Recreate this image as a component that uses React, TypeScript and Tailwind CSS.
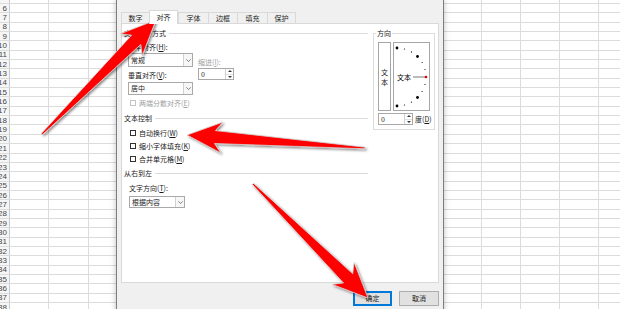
import React from "react";

const ROWS = Array.from({ length: 33 }, (_, i) => i + 6);
const COLS = Array.from({ length: 16 }, (_, i) => i);

const ARROWS: { t: [number, number]; p: [number, number] }[] = [
	{ t: [42, 134], p: [156, 20] },
	{ t: [365, 148], p: [187, 135] },
	{ t: [253, 184], p: [368, 298] },
];

function arrowPoints(t: [number, number], p: [number, number]) {
	const dx = p[0] - t[0];
	const dy = p[1] - t[1];
	const len = Math.hypot(dx, dy);
	const ux = dx / len;
	const uy = dy / len;
	const nx = -uy;
	const ny = ux;
	const at = (back: number, side: number) => [
		p[0] - ux * back + nx * side,
		p[1] - uy * back + ny * side,
	];
	const pts = [
		[t[0] + nx * 0.8, t[1] + ny * 0.8],
		at(28, 6.5),
		at(35, 15.5),
		[p[0], p[1]],
		at(35, -15.5),
		at(28, -6.5),
		[t[0] - nx * 0.8, t[1] - ny * 0.8],
	];
	return pts.map((q) => q[0].toFixed(1) + "," + q[1].toFixed(1)).join(" ");
}

function Key({ k }: { k: string }) {
	return <span className="underline">{k}</span>;
}

function GroupHeader({ children }: { children: React.ReactNode }) {
	return (
		<div className="flex items-center h-[9px] gap-[3px]">
			<span className="whitespace-nowrap">{children}</span>
			<div className="flex-1 h-px bg-[#dcdcdc]" />
		</div>
	);
}

function Check({
	children,
	disabled,
	className,
}: {
	children: React.ReactNode;
	disabled?: boolean;
	className?: string;
}) {
	return (
		<div className={"flex items-center h-[9px] gap-[3px] pl-[6px] " + (className || "")}>
			<div
				className={
					"w-[6px] h-[6px] border bg-white " +
					(disabled ? "border-[#c4c4c4]" : "border-[#333333]")
				}
			/>
			<span className={disabled ? "text-[#a0a0a0]" : ""}>{children}</span>
		</div>
	);
}

function Select({
	value,
	width,
	height,
	className,
}: {
	value: string;
	width: string;
	height: string;
	className?: string;
}) {
	return (
		<div
			className={
				"flex border border-[#a9a9a9] bg-white " + width + " " + height + " " + (className || "")
			}
		>
			<div className="flex-1 flex items-center pl-[2px]">{value}</div>
			<div className="w-[9px] border-l border-[#d0d0d0] bg-[#f7f7f7] flex items-center justify-center">
				<svg width="5" height="3" viewBox="0 0 5 3">
					<path d="M0.3 0.3 L2.5 2.6 L4.7 0.3" fill="none" stroke="#555" strokeWidth="0.7" />
				</svg>
			</div>
		</div>
	);
}

function Spin({ width, className }: { width: string; className?: string }) {
	return (
		<div className={"flex h-[12px] border border-[#a9a9a9] bg-white " + width + " " + (className || "")}>
			<div className="flex-1 flex items-center pl-[2px]">0</div>
			<div className="w-[8px] border-l border-[#d0d0d0] flex flex-col">
				<div className="flex-1 flex items-center justify-center border-b border-[#e0e0e0]">
					<svg width="4" height="2" viewBox="0 0 4 2">
						<path d="M0 2 L2 0 L4 2 Z" fill="#333" />
					</svg>
				</div>
				<div className="flex-1 flex items-center justify-center">
					<svg width="4" height="2" viewBox="0 0 4 2">
						<path d="M0 0 L2 2 L4 0 Z" fill="#333" />
					</svg>
				</div>
			</div>
		</div>
	);
}

function Orientation() {
	const dots = [];
	for (let a = -90; a <= 90; a += 15) {
		const r = (a * Math.PI) / 180;
		const x = 4 + 29 * Math.cos(r);
		const y = 35 + 29 * Math.sin(r);
		const big = Math.abs(a) === 45 || Math.abs(a) === 90;
		dots.push(
			<circle
				key={a}
				cx={x}
				cy={y}
				r={a === 0 ? 1.3 : big ? 1.4 : 0.6}
				fill={a === 0 ? "#e00000" : "#000"}
			/>
		);
	}
	return (
		<svg width="37" height="69" viewBox="0 0 37 69" className="absolute left-[-1px] top-[-1px]">
			{dots}
			<text x="4" y="37.5" fontSize="7" fill="#000" fontFamily="Noto Sans CJK SC, sans-serif">
				文本
			</text>
			<line x1="20" y1="35" x2="32" y2="35" stroke="#555" strokeWidth="0.8" />
		</svg>
	);
}

export default function App() {
	const tabs = [
		{ label: "数字", w: "w-[28px]" },
		{ label: "对齐", w: "w-[29px]", active: true },
		{ label: "字体", w: "w-[30px]" },
		{ label: "边框", w: "w-[29px]" },
		{ label: "填充", w: "w-[30px]" },
		{ label: "保护", w: "w-[29px]" },
	];

	return (
		<div className="relative w-[620px] h-[309px] overflow-hidden bg-white font-['Noto_Sans_CJK_SC',sans-serif] text-[7px] leading-[9px] text-[#1a1a1a]">
			{/* sheet behind the dialog */}
			<div className="flex flex-col">
				<div className="flex h-[4px] border-b border-[#dcdcdc]">
					<div className="w-[10px] shrink-0 border-r border-[#c8c8c8] bg-[#f6f6f6]" />
					{COLS.map((c) => (
						<div key={c} className="w-[39.3px] shrink-0 border-r border-[#dcdcdc]" />
					))}
				</div>
				{ROWS.map((r) => (
					<div key={r} className="flex h-[9.35px] border-b border-[#dcdcdc]">
						<div className="w-[10px] shrink-0 border-r border-[#c8c8c8] bg-[#f6f6f6] flex justify-end items-center overflow-hidden pr-[2px] font-['Liberation_Sans',sans-serif] text-[8px] text-[#444]">
							<span className="whitespace-nowrap">{r}</span>
						</div>
						{COLS.map((c) => (
							<div key={c} className="w-[39.3px] shrink-0 border-r border-[#dcdcdc]" />
						))}
					</div>
				))}
			</div>

			{/* format cells dialog */}
			<div className="absolute left-[116px] top-0 w-[328px] h-[330px] bg-[#f0f0f0] border-x border-[#7d7d7d] px-[4px] pt-[10px] shadow-[0_0_6px_rgba(0,0,0,0.25)]">
				<div className="flex items-end h-[13px]">
					{tabs.map((t, i) =>
						t.active ? (
							<div
								key={t.label}
								className={
									t.w +
									" h-[14px] mb-[-1px] relative z-10 bg-white border border-b-0 border-[#d9d9d9] flex items-center justify-center"
								}
							>
								{t.label}
							</div>
						) : (
							<div
								key={t.label}
								className={
									t.w +
									" h-[11px] border-t border-l border-[#d9d9d9] flex items-center justify-center " +
									(i === tabs.length - 1 ? "border-r" : "")
								}
							>
								{t.label}
							</div>
						)
					)}
				</div>

				<div className="h-[260px] border border-[#d9d9d9] bg-white flex pl-[2px] pt-[5px]">
					{/* left column */}
					<div className="w-[244px] flex flex-col">
						<GroupHeader>文本对齐方式</GroupHeader>
						<div className="flex pl-[4px] mt-[4.5px]">
							<div className="flex flex-col">
								<div className="h-[9px]">
									水平对齐(<Key k="H" />):
								</div>
								<Select value="常规" width="w-[65px]" height="h-[14px]" className="mt-[1.5px]" />
								<div className="h-[9px] mt-[3.5px]">
									垂直对齐(<Key k="V" />):
								</div>
								<Select value="居中" width="w-[65px]" height="h-[13px]" className="mt-[2.5px]" />
							</div>
							<div className="flex flex-col ml-[5px]">
								<div className="h-[9px] mt-[15px] text-[#a0a0a0]">
									缩进(<Key k="I" />):
								</div>
								<Spin width="w-[36px]" className="mt-[1.5px]" />
							</div>
						</div>
						<Check disabled className="mt-[3.5px]">
							两端分散对齐(<Key k="E" />)
						</Check>
						<div className="mt-[6px]">
							<GroupHeader>文本控制</GroupHeader>
						</div>
						<Check className="mt-[6px]">
							自动换行(<Key k="W" />)
						</Check>
						<Check className="mt-[4px]">
							缩小字体填充(<Key k="K" />)
						</Check>
						<Check className="mt-[4px]">
							合并单元格(<Key k="M" />)
						</Check>
						<div className="mt-[5px]">
							<GroupHeader>从右到左</GroupHeader>
						</div>
						<div className="pl-[5px] mt-[6px] h-[9px]">
							文字方向(<Key k="T" />):
						</div>
						<Select value="根据内容" width="w-[56px]" height="h-[12px]" className="ml-[5px] mt-[3.5px]" />
					</div>

					{/* orientation group */}
					<div className="ml-[5px] mt-[4px] w-[62px] h-[97px] border border-[#dcdcdc] relative pl-[4px] pt-[8px]">
						<div className="absolute left-[2px] top-[-5px] bg-white px-[1px] h-[9px]">方向</div>
						<div className="flex gap-[2px]">
							<div className="w-[13px] h-[69px] border border-[#a6a6a6] flex flex-col items-center justify-center leading-[10px]">
								<span>文</span>
								<span>本</span>
							</div>
							<div className="w-[37px] h-[69px] border border-[#a6a6a6] relative">
								<Orientation />
							</div>
						</div>
						<div className="flex items-center mt-[2px]">
							<Spin width="w-[35px]" />
							<span className="ml-[2px] whitespace-nowrap">
								度(<Key k="D" />)
							</span>
						</div>
					</div>
				</div>

				<div className="flex justify-end gap-[7px] mt-[8px]">
					<div className="w-[39px] h-[15px] border-2 border-[#0078d7] bg-[#e1e1e1] flex items-center justify-center">
						确定
					</div>
					<div className="w-[40px] h-[15px] border border-[#adadad] bg-[#e1e1e1] flex items-center justify-center">
						取消
					</div>
				</div>
			</div>

			{/* red pointer arrows */}
			<svg
				className="absolute left-0 top-0 pointer-events-none"
				width="620"
				height="309"
				viewBox="0 0 620 309"
			>
				<defs>
					<filter id="arrowShadow" x="-20%" y="-20%" width="140%" height="140%">
						<feDropShadow dx="1.5" dy="1.5" stdDeviation="1" floodColor="#000" floodOpacity="0.45" />
					</filter>
				</defs>
				{ARROWS.map((a, i) => (
					<polygon
						key={i}
						points={arrowPoints(a.t, a.p)}
						fill="#ff0000"
						stroke="#d4d4d4"
						strokeWidth="0.8"
						strokeLinejoin="round"
						filter="url(#arrowShadow)"
					/>
				))}
			</svg>
		</div>
	);
}
